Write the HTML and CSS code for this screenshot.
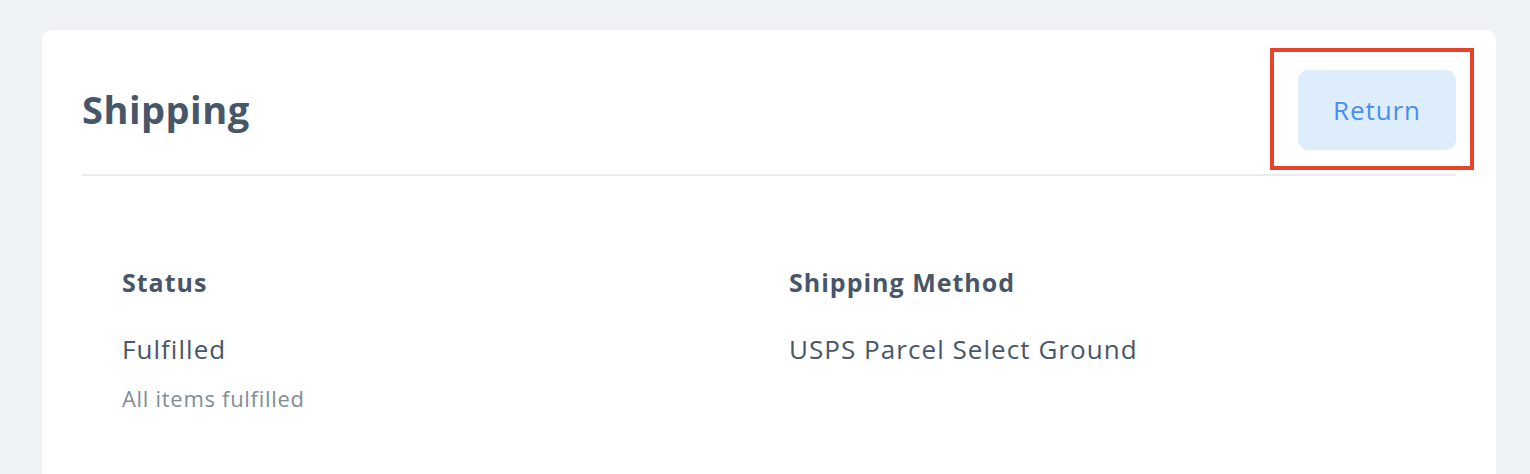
FILE: index.html
```html
<!DOCTYPE html>
<html lang="en">
<head>
    <meta charset="UTF-8">
    <title>Shipping</title>
    <link rel="stylesheet" href="styles.css">
</head>
<body>
    <div class="card">
        <div class="cardHead">
            <h2 class="title">Shipping</h2>
            <div class="actions">
                <button class="returnBtn">Return</button>
                <span class="highlight"></span>
            </div>
        </div>
        <div class="info">
            <div class="field">
                <h3>Status</h3>
                <p class="value">Fulfilled</p>
                <p class="note">All items fulfilled</p>
            </div>
            <div class="field">
                <h3>Shipping Method</h3>
                <p class="value">USPS Parcel Select Ground</p>
            </div>
        </div>
    </div>
</body>
</html>
```

FILE: styles.css
```css
*{
    margin:0;
    padding:0;
    box-sizing:border-box;
}
body{
    background:#eff3f6;
    font-family:"Open Sans","Lato",sans-serif;
    color:#48566a;
    padding:30px 34px 0 42px;
    overflow:hidden;
}
.card{
    background:#fff;
    border-radius:10px;
    padding:40px 40px 60px;
    height:480px;
}
.cardHead{
    display:flex;
    justify-content:space-between;
    align-items:center;
    padding-bottom:24px;
    border-bottom:2px solid #e8ecf0;
}
.title{
    font-size:38px;
    font-weight:700;
    line-height:1.2;
    letter-spacing:0.5px;
}
.actions{
    position:relative;
}
.returnBtn{
    display:block;
    width:158px;
    height:80px;
    border:none;
    border-radius:10px;
    background:#ddedfc;
    color:#4a8df2;
    font-family:inherit;
    font-size:26px;
    font-weight:500;
    letter-spacing:0.9px;
    cursor:pointer;
}
.highlight{
    position:absolute;
    left:-28px;
    top:-22px;
    width:204px;
    height:122px;
    border:4px solid #e5432a;
}
.info{
    display:grid;
    grid-template-columns:1fr 1fr;
    padding:91px 0 0 40px;
    line-height:1.2;
}
.field h3{
    font-size:25px;
    font-weight:700;
    letter-spacing:1px;
}
.value{
    font-size:26px;
    margin-top:37px;
    letter-spacing:1.05px;
}
.note{
    font-size:22px;
    color:#818c9b;
    margin-top:20px;
    letter-spacing:0.7px;
}
```
